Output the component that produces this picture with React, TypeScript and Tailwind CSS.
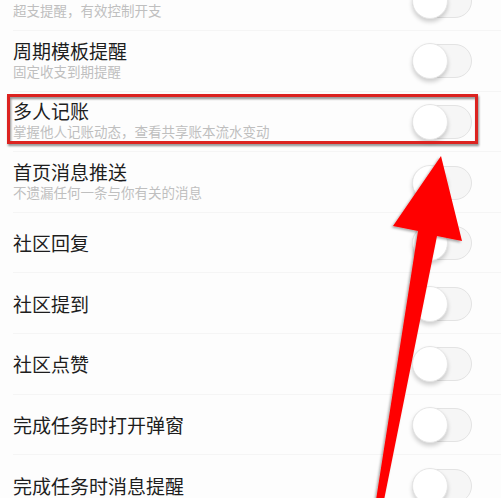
import React from "react";

type Item = { title: string; desc?: string };

const items: Item[] = [
  { title: "预算提醒", desc: "超支提醒，有效控制开支" },
  { title: "周期模板提醒", desc: "固定收支到期提醒" },
  { title: "多人记账", desc: "掌握他人记账动态，查看共享账本流水变动" },
  { title: "首页消息推送", desc: "不遗漏任何一条与你有关的消息" },
  { title: "社区回复" },
  { title: "社区提到" },
  { title: "社区点赞" },
  { title: "完成任务时打开弹窗" },
  { title: "完成任务时消息提醒" },
];

function Toggle() {
  return (
    <div className="relative h-[34px] w-[60px] rounded-full border border-[#e3e3e3] bg-[#f6f6f6]">
      <div className="absolute left-[-1px] top-[-2px] h-[36px] w-[36px] rounded-full border border-[#e6e6e6] bg-white shadow-[0_3px_4px_rgba(0,0,0,0.18)]" />
    </div>
  );
}

function Row({ item, highlight }: { item: Item; highlight?: boolean }) {
  return (
    <div className="relative flex h-[60.6px] shrink-0 items-center justify-between pl-[13px] pr-[29px]">
      {item.desc ? (
        <div className="flex flex-col gap-[3px] pb-[3px]">
          <span className="text-[19px] leading-[19px] text-[#1e1e1e]">{item.title}</span>
          <span className="text-[13.5px] leading-[16px] text-[#bfbfbf]">{item.desc}</span>
        </div>
      ) : (
        <span className="text-[19px] leading-[20px] text-[#1e1e1e]">{item.title}</span>
      )}
      <Toggle />
      <div className="absolute bottom-0 left-[13px] right-0 h-px bg-[#f5f5f5]" />
      {highlight && (
        <div className="absolute left-[7px] right-[23px] top-[2px] h-[50px] border-[3px] border-[#dc2320] drop-shadow-[1px_2px_1px_rgba(0,0,0,0.45)]" />
      )}
    </div>
  );
}

export default function App() {
  return (
    <div
      className="relative h-[498px] w-[501px] overflow-hidden bg-[#fdfdfd]"
      style={{ fontFamily: '"Noto Sans CJK SC", "Noto Sans", sans-serif' }}
    >
      <div className="mt-[-29.5px] flex flex-col">
        {items.map((it, i) => (
          <Row key={i} item={it} highlight={i === 2} />
        ))}
      </div>
      <svg
        className="pointer-events-none absolute left-0 top-0"
        width="501"
        height="498"
        viewBox="0 0 501 498"
      >
        <defs>
          <filter id="sh" x="-20%" y="-20%" width="140%" height="140%">
            <feDropShadow dx="-1.5" dy="1.5" stdDeviation="1.2" floodColor="#000" floodOpacity="0.35" />
          </filter>
        </defs>
        <polygon
          points="441,156 462,241 437,236 384,500 376,500 418,231 393,226"
          fill="#ff0000"
          filter="url(#sh)"
        />
      </svg>
    </div>
  );
}
